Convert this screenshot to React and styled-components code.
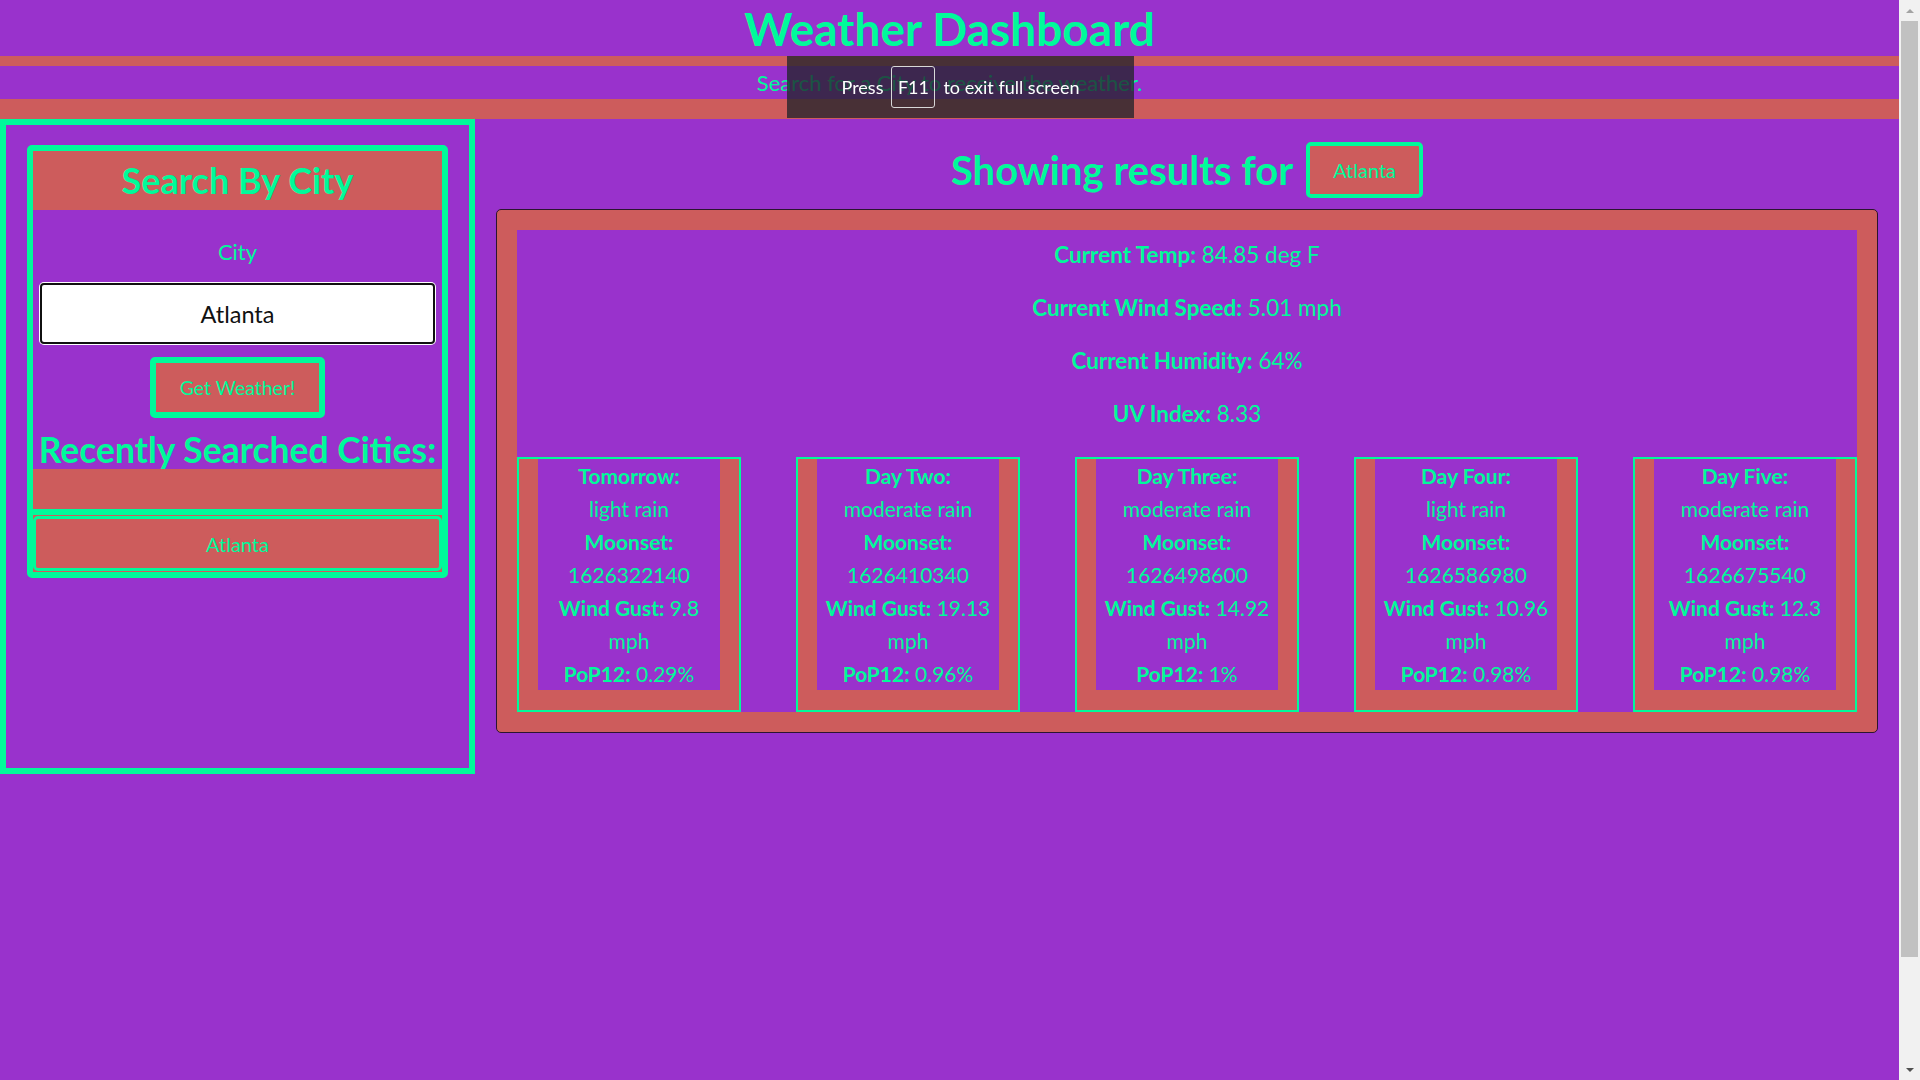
import React, { useEffect, useRef } from 'react';
import styled, { createGlobalStyle } from 'styled-components';

const purple = '#9932CC';
const red = '#CD5C5C';
const green = '#00FA9A';

const GlobalStyle = createGlobalStyle`
  html, body {
    margin: 0;
    padding: 0;
    background-color: ${purple};
    font-family: "Lato", "Open Sans", sans-serif;
    color: ${green};
    overflow: hidden;
  }
  * {
    box-sizing: border-box;
  }
`;

const Shell = styled.div`
  display: flex;
  align-items: flex-start;
  height: 100vh;
`;

const Page = styled.div`
  flex: 1;
  min-width: 0;
  min-height: 1210px;
`;

const ScrollRail = styled.div`
  flex: 0 0 21px;
  display: flex;
  flex-direction: column;
  height: 100vh;
  padding: 0 2px;
  background-color: #f1f1f1;
`;

const Arrow = styled.div`
  flex: 0 0 21px;
  display: flex;
  align-items: center;
  justify-content: center;

  &::before {
    content: '';
    border-left: 4px solid transparent;
    border-right: 4px solid transparent;
    ${(p) => (p.$down ? 'border-top: 4px solid #505050;' : 'border-bottom: 4px solid #a3a3a3;')}
  }
`;

const Thumb = styled.div`
  flex: 0 0 936px;
  margin-bottom: auto;
  background-color: #c1c1c1;
`;

const Title = styled.h1`
  margin: 0;
  height: 66px;
  line-height: 58px;
  font-size: 46px;
  font-weight: 700;
  text-align: center;
  border-bottom: 10px solid ${red};
`;

const Subtitle = styled.p`
  margin: 0;
  height: 53px;
  line-height: 33px;
  font-size: 22px;
  text-align: center;
  border-bottom: 20px solid ${red};
`;

const Content = styled.div`
  display: flex;
  align-items: flex-start;
`;

const Sidebar = styled.aside`
  flex: 0 0 475px;
  height: 655px;
  border: 6px solid ${green};
  padding: 20px 21px;
`;

const SearchCard = styled.div`
  border: 6px solid ${green};
  border-radius: 5px;
  background-color: ${red};
  overflow: hidden;
`;

const CardHeader = styled.h2`
  margin: 0;
  height: 59px;
  line-height: 59px;
  font-size: 36px;
  font-weight: 700;
  text-align: center;
  background-color: ${red};
`;

const CardBody = styled.div`
  display: flex;
  flex-direction: column;
  align-items: center;
  background-color: ${purple};
`;

const Label = styled.label`
  margin-top: 27px;
  line-height: 30px;
  font-size: 22px;
`;

const CityInput = styled.input`
  margin-top: 16px;
  width: 395px;
  height: 61px;
  border: 2px solid #101010;
  border-radius: 4px;
  box-shadow: 0 0 0 1px #ffffff;
  outline: none;
  background: #ffffff;
  color: #111111;
  font-family: inherit;
  font-size: 23.5px;
  text-align: center;
`;

const ActionButton = styled.button`
  margin-top: 13px;
  width: 175px;
  height: 61px;
  border: 6px solid ${green};
  border-radius: 5px;
  background-color: ${red};
  color: ${green};
  font-family: inherit;
  font-size: 19.5px;
`;

const RecentTitle = styled.h2`
  margin: 12px 0 0;
  line-height: 39px;
  font-size: 35.5px;
  font-weight: 700;
  white-space: nowrap;
`;

const RecentList = styled.div`
  padding-top: 40px;
  background-color: ${red};
`;

const RecentItem = styled.div`
  border-top: 6px solid ${green};
  padding: 1px 0 1px;
`;

const HistoryButton = styled.button`
  display: block;
  width: 100%;
  height: 55px;
  border: 3px solid ${green};
  border-radius: 5px;
  background-color: ${red};
  color: ${green};
  font-family: inherit;
  font-size: 20px;
`;

const Main = styled.main`
  flex: 1;
  min-width: 0;
  padding: 23px 21px 0 21px;
`;

const ResultsHead = styled.div`
  display: flex;
  align-items: center;
  justify-content: center;
  gap: 13px;
`;

const ResultsTitle = styled.h2`
  margin: 0;
  font-size: 40px;
  font-weight: 700;
`;

const CityTag = styled.button`
  width: 117px;
  height: 56px;
  border: 4px solid ${green};
  border-radius: 5px;
  background-color: ${red};
  color: ${green};
  font-family: inherit;
  font-size: 20px;
`;

const ResultsBox = styled.section`
  margin-top: 11px;
  padding: 20px;
  border: 1px solid #2b1530;
  border-radius: 5px;
  background-color: ${red};
`;

const ResultsInner = styled.div`
  background-color: ${purple};
`;

const Current = styled.div`
  display: flex;
  flex-direction: column;
  align-items: center;
  gap: 24px;
  padding: 10px 0 29px;
`;

const InfoLine = styled.p`
  margin: 0;
  line-height: 29px;
  font-size: 22.5px;
`;

const Forecast = styled.div`
  display: flex;
  justify-content: space-between;
`;

const DayCard = styled.div`
  width: 224px;
  padding: 0 19px 20px;
  border: 2px solid ${green};
  background-color: ${red};
`;

const DayBody = styled.div`
  background-color: ${purple};
  text-align: center;
  font-size: 21px;
  line-height: 33px;
`;

const Bubble = styled.div`
  position: fixed;
  top: 56px;
  left: calc(50vw - 173px);
  width: 347px;
  height: 62px;
  display: flex;
  align-items: center;
  justify-content: center;
  gap: 8px;
  background-color: rgba(34, 36, 44, 0.78);
  color: #ffffff;
  font-size: 18px;
`;

const Key = styled.span`
  display: inline-flex;
  align-items: center;
  justify-content: center;
  width: 44px;
  height: 42px;
  border: 1px solid #d8d8d8;
  border-radius: 3px;
`;

const days = [
  { name: 'Tomorrow:', desc: 'light rain', moonset: 1626322140, gust: 9.8, pop: '0.29%' },
  { name: 'Day Two:', desc: 'moderate rain', moonset: 1626410340, gust: 19.13, pop: '0.96%' },
  { name: 'Day Three:', desc: 'moderate rain', moonset: 1626498600, gust: 14.92, pop: '1%' },
  { name: 'Day Four:', desc: 'light rain', moonset: 1626586980, gust: 10.96, pop: '0.98%' },
  { name: 'Day Five:', desc: 'moderate rain', moonset: 1626675540, gust: 12.3, pop: '0.98%' },
];

function App() {
  const inputRef = useRef(null);

  useEffect(() => {
    const el = inputRef.current;
    if (el) {
      el.focus();
      el.setSelectionRange(el.value.length, el.value.length);
    }
  }, []);

  return (
    <Shell>
      <GlobalStyle />
      <Page>
        <header>
          <Title>Weather Dashboard</Title>
          <Subtitle>Search for a City to receive the weather.</Subtitle>
        </header>
        <Content>
          <Sidebar>
            <SearchCard>
              <CardHeader>Search By City</CardHeader>
              <CardBody>
                <Label htmlFor="city">City</Label>
                <CityInput id="city" ref={inputRef} defaultValue="Atlanta" />
                <ActionButton>Get Weather!</ActionButton>
                <RecentTitle>Recently Searched Cities:</RecentTitle>
              </CardBody>
              <RecentList>
                <RecentItem>
                  <HistoryButton>Atlanta</HistoryButton>
                </RecentItem>
              </RecentList>
            </SearchCard>
          </Sidebar>
          <Main>
            <ResultsHead>
              <ResultsTitle>Showing results for</ResultsTitle>
              <CityTag>Atlanta</CityTag>
            </ResultsHead>
            <ResultsBox>
              <ResultsInner>
                <Current>
                  <InfoLine><b>Current Temp:</b> 84.85 deg F</InfoLine>
                  <InfoLine><b>Current Wind Speed:</b> 5.01 mph</InfoLine>
                  <InfoLine><b>Current Humidity:</b> 64%</InfoLine>
                  <InfoLine><b>UV Index:</b> 8.33</InfoLine>
                </Current>
                <Forecast>
                  {days.map((d) => (
                    <DayCard key={d.name}>
                      <DayBody>
                        <b>{d.name}</b>
                        <div>{d.desc}</div>
                        <b>Moonset:</b>
                        <div>{d.moonset}</div>
                        <div><b>Wind Gust:</b> {d.gust} mph</div>
                        <div><b>PoP12:</b> {d.pop}</div>
                      </DayBody>
                    </DayCard>
                  ))}
                </Forecast>
              </ResultsInner>
            </ResultsBox>
          </Main>
        </Content>
      </Page>
      <ScrollRail>
        <Arrow />
        <Thumb />
        <Arrow $down />
      </ScrollRail>
      <Bubble>
        <span>Press</span>
        <Key>F11</Key>
        <span>to exit full screen</span>
      </Bubble>
    </Shell>
  );
}

export default App;
